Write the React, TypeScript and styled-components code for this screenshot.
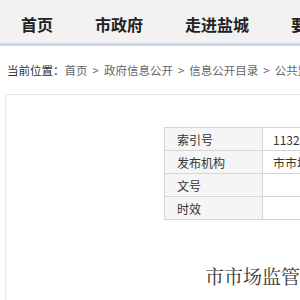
import React from 'react'
import styled, { createGlobalStyle } from 'styled-components'

const GlobalStyle = createGlobalStyle`
  body {
    margin: 0;
    background: #ffffff;
    font-family: 'Noto Sans CJK SC', 'Liberation Sans', sans-serif;
    overflow: hidden;
  }
`

const Page = styled.div`
  width: 1200px;
`

const NavBar = styled.nav`
  display: flex;
  height: 43px;
  background: #f2f2f2;
  border-bottom: 3px solid #c8d7ea;
  white-space: nowrap;
`

const NavItem = styled.a`
  display: block;
  padding: 0 21px;
  line-height: 48px;
  font-size: 16px;
  font-weight: 700;
  color: #222222;
  text-decoration: none;
`

const Breadcrumb = styled.div`
  height: 48px;
  line-height: 48px;
  padding-left: 7px;
  font-size: 11.5px;
  color: #666666;
  white-space: nowrap;
`

const CrumbLabel = styled.span`
  color: #333333;
`

const Sep = styled.span`
  margin: 0 5px;
`

const ContentBox = styled.section`
  margin-left: 5px;
  border: 1px solid #e8e8e8;
  padding-top: 32px;
  min-height: 400px;
`

const MetaTable = styled.table`
  margin-left: 158px;
  border-collapse: collapse;
  font-size: 12px;
  color: #333333;
`

const LabelCell = styled.td`
  width: 85px;
  height: 22px;
  padding: 0 0 0 12px;
  background: #f5f5f5;
  border: 1px solid #d6d6d6;
`

const ValueCell = styled.td`
  width: 300px;
  padding: 0 10px;
  border: 1px solid #d6d6d6;
  white-space: nowrap;
`

const Title = styled.h1`
  margin: 42px 0 0;
  padding-left: 199px;
  font-family: 'Noto Serif CJK SC', 'AR PL UMing CN', 'Liberation Serif', serif;
  font-size: 19px;
  font-weight: 400;
  color: #333333;
  white-space: nowrap;
`

const navItems = ['首页', '市政府', '走进盐城', '要闻动态', '政务公开']

const meta = [
  ['索引号', '113209000140013125/2023-00123'],
  ['发布机构', '市市场监督管理局'],
  ['文号', ''],
  ['时效', ''],
]

export default function App() {
  return (
    <Page>
      <GlobalStyle />
      <NavBar>
        {navItems.map((item) => (
          <NavItem key={item} href="#">
            {item}
          </NavItem>
        ))}
      </NavBar>

      <Breadcrumb>
        <CrumbLabel>当前位置：</CrumbLabel>
        首页<Sep>&gt;</Sep>政府信息公开<Sep>&gt;</Sep>信息公开目录<Sep>&gt;</Sep>公共监管
      </Breadcrumb>

      <ContentBox>
        <MetaTable>
          <tbody>
            {meta.map(([label, value]) => (
              <tr key={label}>
                <LabelCell>{label}</LabelCell>
                <ValueCell>{value}</ValueCell>
              </tr>
            ))}
          </tbody>
        </MetaTable>
        <Title>市市场监管局关于公布抽查检验结果的通告</Title>
      </ContentBox>
    </Page>
  )
}
